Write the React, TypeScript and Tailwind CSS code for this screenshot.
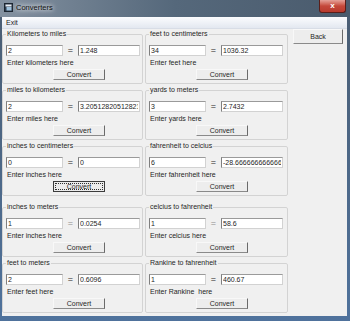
import React from 'react';

interface Conv {
  title: string;
  input: string;
  result: string;
  hint: string;
  dimEq?: boolean;
  focused?: boolean;
  extraTop?: boolean;
}

const left: Conv[] = [
  { title: 'Kilometers to miles', input: '2', result: '1.248', hint: 'Enter kilometers here' },
  { title: 'miles to kilometers', input: '2', result: '3.20512820512821', hint: 'Enter miles here' },
  { title: 'inches to centimeters', input: '0', result: '0', hint: 'Enter inches here', focused: true },
  { title: 'inches to meters', input: '1', result: '0.0254', hint: 'Enter inches here', dimEq: true, extraTop: true },
  { title: 'feet to meters', input: '2', result: '0.6096', hint: 'Enter feet here' },
];

const right: Conv[] = [
  { title: 'feet to centimeters', input: '34', result: '1036.32', hint: 'Enter feet here' },
  { title: 'yards to meters', input: '3', result: '2.7432', hint: 'Enter yards here' },
  { title: 'fahrenheit to celcius', input: '6', result: '-28.6666666666666', hint: 'Enter fahrenheit here' },
  { title: 'celcius to fahrenheit', input: '1', result: '58.6', hint: 'Enter celcius here', dimEq: true, extraTop: true },
  { title: 'Rankine to  fahrenheit', input: '1', result: '460.67', hint: 'Enter Rankine  here' },
];

const inputCls =
  'h-[11px] bg-white border border-[#d2d2d2] border-l-[#7f7f7f] border-t-[#9a9a9a] px-[1px] text-[7px] leading-[9px] text-[#262626] outline-none whitespace-pre';

function ConvertButton({ focused }: { focused?: boolean }) {
  if (focused) {
    return (
      <button className="ml-[50px] w-[52px] h-[11px] bg-[#ececec] border border-[#3c3c3c] p-[1px] flex">
        <span className="flex-1 border border-dotted border-[#303030] flex items-center justify-center text-[7px] leading-[7px] text-[#262626]">
          Convert
        </span>
      </button>
    );
  }
  return (
    <button className="ml-[50px] w-[52px] h-[11px] bg-[#ededed] border border-[#f8f8f8] border-r-[#6a6a6a] border-b-[#8a8a8a] flex items-center justify-center text-[7px] leading-[7px] text-[#262626]">
      Convert
    </button>
  );
}

function Group({ c }: { c: Conv }) {
  return (
    <fieldset
      className={`h-[54px] border border-[#d3d3d3] rounded-[2px] flex flex-col ${c.extraTop ? 'mt-[5px]' : ''}`}
    >
      <legend className="ml-[3px] px-[1px] text-[7px] leading-[8px] text-[#262626]">{c.title}</legend>
      <div className="flex items-center pl-[3px] mt-[7px]">
        <input readOnly value={c.input} className={`${inputCls} w-[57px]`} />
        <span
          className={`w-[15px] text-center text-[9px] leading-[9px] ${c.dimEq ? 'text-[#8c8c8c]' : 'text-[#262626]'}`}
        >
          =
        </span>
        <input readOnly value={c.result} className={`${inputCls} w-[62px]`} />
      </div>
      <div className="pl-[4px] mt-[3px] text-[7px] leading-[8px] text-[#262626] whitespace-pre">{c.hint}</div>
      <div className="mt-[2px] flex">
        <ConvertButton focused={c.focused} />
      </div>
    </fieldset>
  );
}

function AppIcon() {
  return (
    <svg width="9" height="9" viewBox="0 0 9 9">
      <rect x="0.5" y="0.5" width="8" height="8" fill="#2d3b4c" stroke="#1b2530" />
      <rect x="1.5" y="1.5" width="6" height="2" fill="#e9eef4" />
      <rect x="2.5" y="4" width="5" height="3.5" fill="#9fc3de" />
    </svg>
  );
}

export default function App() {
  return (
    <div
      className="w-[350px] h-[321px] bg-gradient-to-b from-[#4a5d72] to-[#4f729c] flex flex-col overflow-hidden"
      style={{ fontFamily: '"Liberation Sans", Arial, sans-serif' }}
    >
      {/* Title bar */}
      <div className="h-[17px] flex items-start bg-gradient-to-r from-[#8391a0] via-[#55687b] to-[#4a5b6d]">
        <div className="flex items-center gap-[3px] pl-[4px] pt-[3px]">
          <AppIcon />
          <span
            className="text-[7.5px] leading-[9px] text-[#111]"
            style={{ textShadow: '0 0 4px #fff, 0 0 6px #fff' }}
          >
            Converters
          </span>
        </div>
        <div className="ml-auto mr-[4px] w-[27px] h-[13px] rounded-b-[3px] border border-t-0 border-[#5a1e1a] bg-gradient-to-b from-[#e4a199] via-[#c4483b] to-[#b83a2d] flex items-center justify-center">
          <span className="text-white text-[8px] leading-[8px] font-bold">x</span>
        </div>
      </div>

      <div className="flex-1 ml-[2px] mr-[3px] flex flex-col">
        {/* Menu bar */}
        <div className="h-[12px] bg-gradient-to-b from-[#fbfcfe] to-[#e3e8f0] border-b border-[#d8dde6] flex items-center pl-[4px]">
          <span className="text-[7px] leading-[8px] text-[#1a1a1a]">Exit</span>
        </div>

        {/* Client area */}
        <div className="flex-1 bg-[#f0f0f0] flex items-start">
          <div className="grid grid-cols-[141px_143px] gap-x-[2px] gap-y-[2px] pt-[1px]">
            {left.map((c, i) => (
              <React.Fragment key={i}>
                <Group c={c} />
                <Group c={right[i]} />
              </React.Fragment>
            ))}
          </div>
          <button className="ml-auto mr-[4px] w-[50px] h-[15px] bg-[#ededed] border border-[#f8f8f8] border-r-[#6a6a6a] border-b-[#8a8a8a] flex items-center justify-center text-[7px] leading-[7px] text-[#262626]">
            Back
          </button>
        </div>
      </div>

      <div className="h-[5px]" />
    </div>
  );
}
